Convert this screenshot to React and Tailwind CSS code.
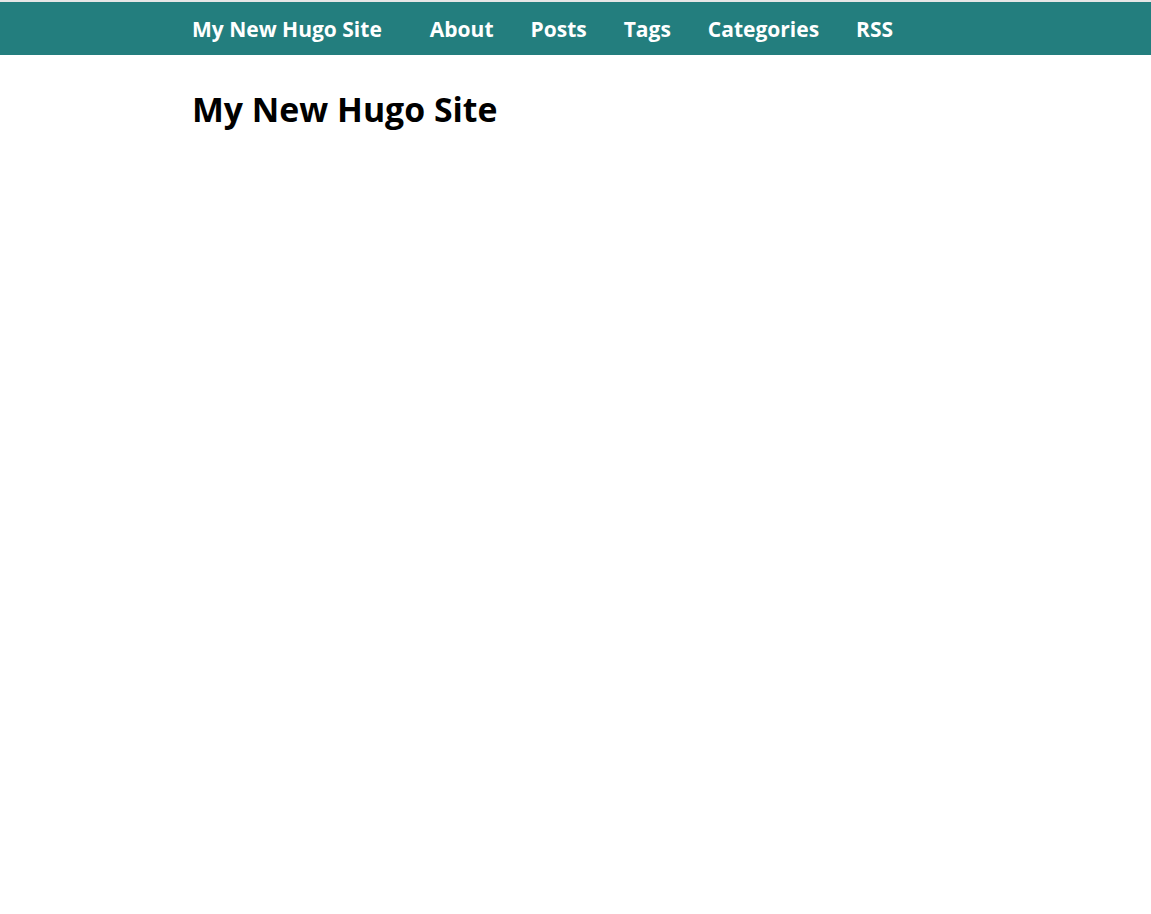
import React from "react";

const links = ["About", "Posts", "Tags", "Categories", "RSS"];

const App = () => {
  return (
    <div className="min-h-screen bg-white font-['Open_Sans',sans-serif]">
      <div className="h-[2px] bg-[#e6e6e6]" />
      {/* Top bar */}
      <nav className="h-[53px] bg-[#237e7e]">
        <div className="flex h-full items-center pl-[192px] pt-[2px] text-[21px] font-bold text-white">
          <a href="#" className="mr-[48px]">My New Hugo Site</a>
          <ul className="flex gap-[37px]">
            {links.map((l) => (
              <li key={l}>
                <a href="#">{l}</a>
              </li>
            ))}
          </ul>
        </div>
      </nav>

      <main className="pl-[192px] pt-[32px]">
        <h1 className="text-[33.8px] font-bold leading-[44px] text-black">My New Hugo Site</h1>
      </main>
    </div>
  );
};

export default App;
